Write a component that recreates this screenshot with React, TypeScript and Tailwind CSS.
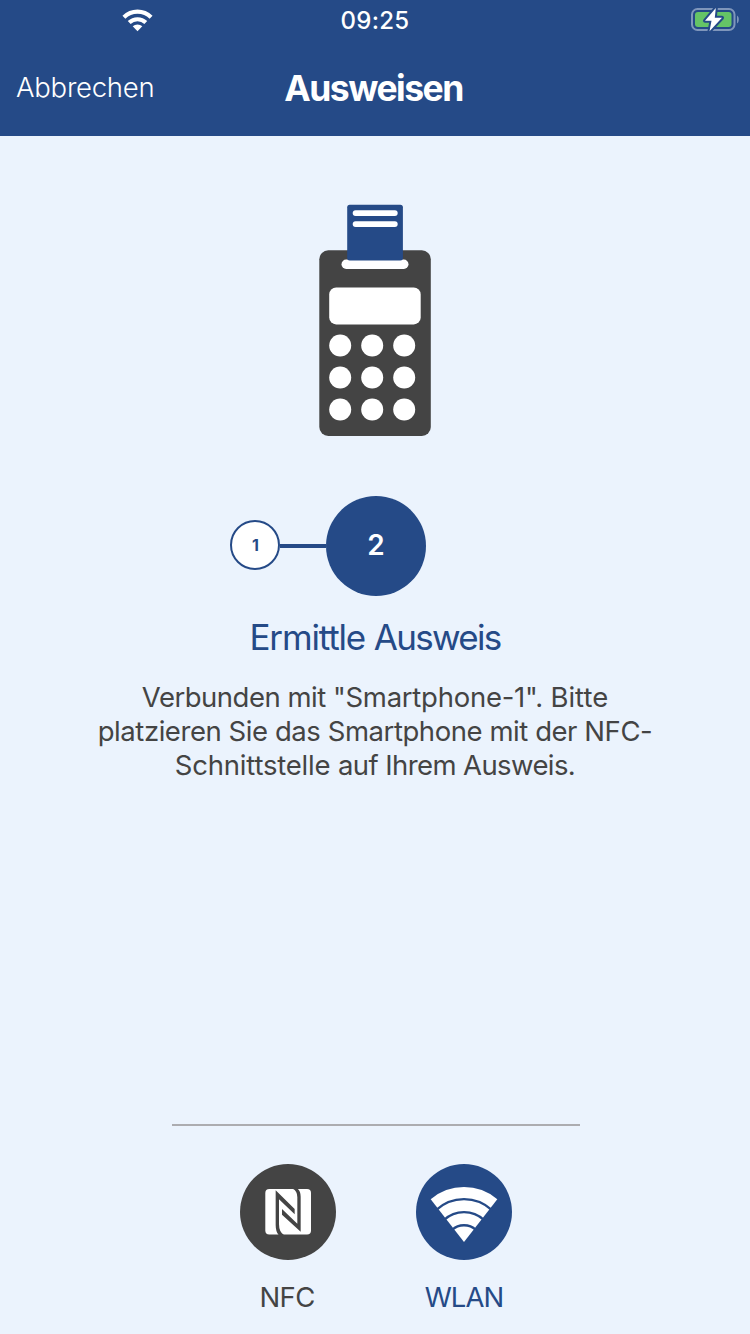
import React from "react";

const dots = [340.2, 372.2, 404.2];
const dotRows = [345.5, 377.5, 409.5];

function StatusBar() {
  return (
    <div className="grid h-10 grid-cols-3 items-start">
      <div className="pl-[122px]">
        <svg width="32" height="40" viewBox="0 0 32 40" className="block">
          <g fill="none" stroke="#fff" strokeWidth="4.2">
            <path d="M1.9 17.2A19.6 19.6 0 0 1 29.1 17.2" />
            <path d="M7.2 22.5A12.2 12.2 0 0 1 23.8 22.5" />
          </g>
          <path fill="#fff" d="M10.7 26.3A7.2 7.2 0 0 1 20.3 26.3L15.5 31.2Z" />
        </svg>
      </div>
      <div className="pt-px text-center text-[24px] leading-10 font-medium tracking-[0.3px]">09:25</div>
      <div className="flex justify-end pr-[10px]">
        <svg width="50" height="40" viewBox="690 0 50 40" className="block">
          <rect x="692" y="9" width="42.5" height="21" rx="5.5" fill="none" stroke="#7f96bb" strokeWidth="2" />
          <rect x="695" y="12" width="36.5" height="15" rx="3" fill="#65c466" />
          <path d="M737 15.5c2.4 1.2 2.4 6.8 0 8z" fill="#7f96bb" />
          <path d="M715.8 8L705 20.8H711.5L709.5 31.2L722 17.8H714.8Z" fill="#fff" stroke="#254a87" strokeWidth="4" strokeLinejoin="round" paintOrder="stroke" />
        </svg>
      </div>
    </div>
  );
}

function Reader() {
  return (
    <svg width="112" height="232" viewBox="319 204 112 232" className="block">
      <rect x="319.3" y="250.3" width="111.5" height="185.7" rx="9" fill="#444" />
      <rect x="341.5" y="259.5" width="67" height="9.5" rx="4.7" fill="#fff" />
      <rect x="347.2" y="204.8" width="55.7" height="55.7" rx="2.5" fill="#254a87" />
      <rect x="352.7" y="210.2" width="45" height="5.8" rx="2.9" fill="#fff" />
      <rect x="352.7" y="221.2" width="45" height="5.8" rx="2.9" fill="#fff" />
      <rect x="329.2" y="287.4" width="91.5" height="37" rx="7" fill="#fff" />
      {dotRows.map((y) => dots.map((x) => <circle key={`${x}-${y}`} cx={x} cy={y} r="11" fill="#fff" />))}
    </svg>
  );
}

export default function App() {
  return (
    <div className="flex h-[1334px] w-[750px] flex-col bg-[#ebf3fd] font-['Inter',sans-serif] text-[#444444]">
      <header className="h-[136px] bg-[#254a87] text-white">
        <StatusBar />
        <div className="grid h-24 grid-cols-3 items-center">
          <div className="pb-0.5 pl-4 text-[27.5px] leading-[94px] font-light tracking-[-0.25px]">Abbrechen</div>
          <div className="pt-0.5 pr-[3px] text-center text-[35.5px] leading-[94px] font-bold tracking-[-1.5px]">Ausweisen</div>
        </div>
      </header>

      <main className="flex flex-1 flex-col items-center pt-[68px]">
        <Reader />
        <div className="mt-[60px] flex w-[290px] items-start">
          <div className="mt-6 flex size-[50px] items-center justify-center rounded-full border-2 border-[#254a87] bg-white pl-px text-[16px] font-bold text-[#254a87]">1</div>
          <div className="mt-12 h-1 w-[46px] bg-[#254a87]" />
          <div className="flex size-[100px] items-center justify-center rounded-full bg-[#254a87] pb-0.5 text-[28px] font-semibold text-white">2</div>
        </div>
        <h1 className="mt-[19px] text-[35px] leading-[44px] text-[#254a87]">
          <span className="tracking-[-1.15px]">Ermittle </span>
          <span className="tracking-[-1.7px]">Ausweis</span>
        </h1>
        <div className="mt-[21px] text-center text-[27.5px] leading-[34px] whitespace-nowrap">
          <p>
            <span className="tracking-[-0.5px]">Verbunden mit </span>
            <span className="tracking-[-0.26px]">"Smartphone-1". </span>
            <span className="tracking-[0px]">Bitte</span>
          </p>
          <p className="tracking-[-0.44px]">platzieren Sie das Smartphone mit der NFC-</p>
          <p>
            <span className="tracking-[-0.2px]">Schnittstelle </span>
            <span className="tracking-[-0.59px]">auf Ihrem Ausweis.</span>
          </p>
        </div>
      </main>

      <footer className="flex h-[210px] flex-col items-center">
        <div className="ml-0.5 h-0.5 w-[408px] bg-[#acacb0]" />
        <div className="mt-[38px] ml-0.5 flex gap-20">
          <button className="flex w-24 flex-col items-center">
            <svg width="96" height="96" viewBox="240 1164 96 96" className="block">
              <circle cx="288" cy="1212" r="48" fill="#444" />
              <rect x="265.3" y="1189" width="45.7" height="45.6" rx="4" fill="#fff" />
              <g transform="translate(230 1150) scale(.33333)" fill="#444">
                <path d="M137 121L194 177V193L147 148V222Q147 246 162 255H146Q137 245 137 225Z" />
                <path d="M212 245L156 194V177L202 221V142Q202 122 188 116H203Q212 124 212 140Z" />
              </g>
            </svg>
            <span className="mt-5 pr-0.5 text-[27.5px] leading-[34px] tracking-[-0.6px]">NFC</span>
          </button>
          <button className="flex w-24 flex-col items-center text-[#254a87]">
            <svg width="96" height="96" viewBox="416 1164 96 96" className="block">
              <circle cx="464" cy="1212" r="48" fill="#254a87" />
              <path d="M464 1242L430.7 1199.3A51 51 0 0 1 497.3 1199.3Z" fill="#fff" />
              <g fill="none" stroke="#254a87" strokeWidth="2.3">
                <path d="M436 1210.2A41 41 0 0 1 492 1210.2" />
                <path d="M444 1220A29.5 29.5 0 0 1 484 1220" />
                <path d="M452 1230A17.5 17.5 0 0 1 476 1230" />
              </g>
            </svg>
            <span className="mt-5 text-[27.5px] leading-[34px] tracking-[-0.9px]">WLAN</span>
          </button>
        </div>
      </footer>
    </div>
  );
}
